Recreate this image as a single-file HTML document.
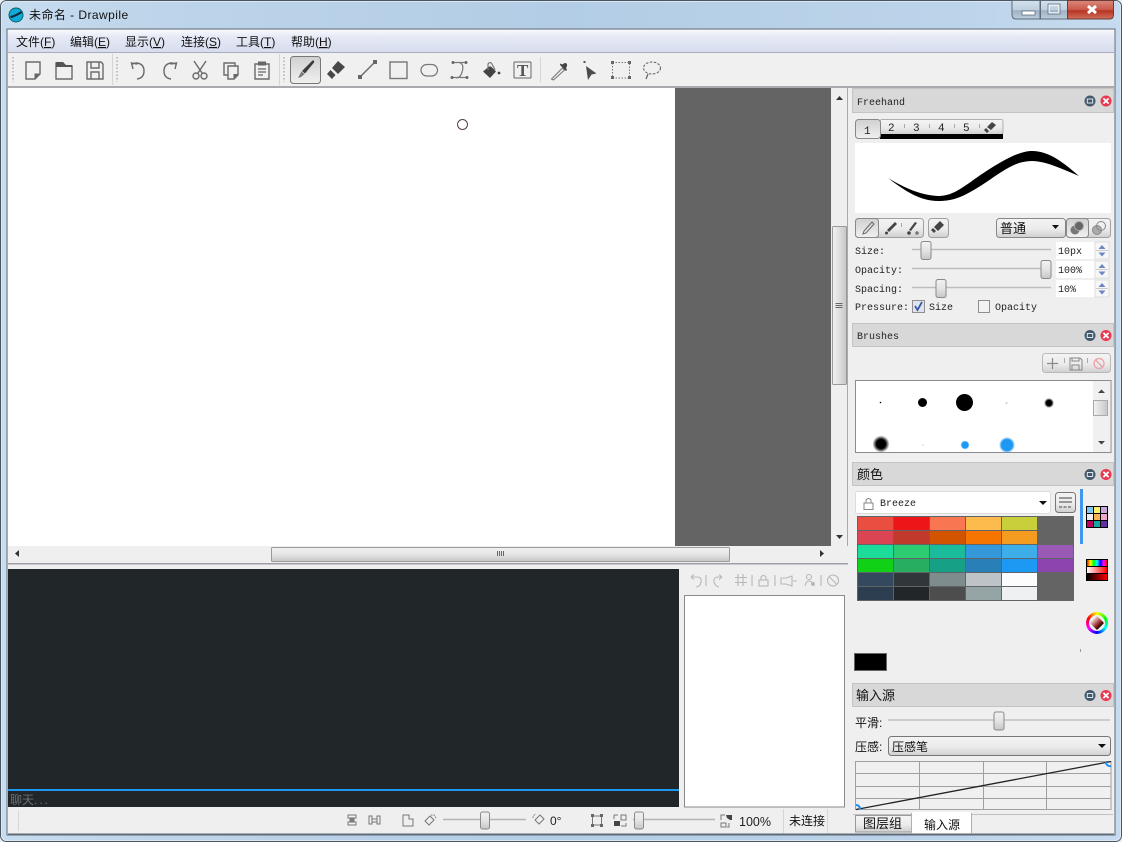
<!DOCTYPE html>
<html><head><meta charset="utf-8"><title>未命名 - Drawpile</title>
<style>
html,body{margin:0;padding:0;width:1122px;height:842px;overflow:hidden;background:#fff;position:relative}
svg{display:block}
text{font-family:"Liberation Sans","Noto Sans CJK SC",sans-serif;font-size:12px;fill:#111}
.m{font-family:"Liberation Mono","Noto Sans CJK SC",monospace;font-size:10px;fill:#222}
.i{fill:none;stroke:#6a6a6a;stroke-width:1.4}
#wheel{position:absolute;left:1086px;top:612px;width:22px;height:22px;border-radius:50%;background:conic-gradient(#ff0,#0f0,#0ff,#00f,#f0f,#f00,#ff0)}
#wheel i{position:absolute;left:3px;top:3px;width:16px;height:16px;border-radius:50%;background:#efefef}
#wheel b{position:absolute;left:6px;top:6px;width:10px;height:10px;transform:rotate(45deg);background:linear-gradient(90deg,#e8d0d0,#a03030 60%,#200000);border-radius:1px}
</style></head><body>
<svg width="1122" height="842" viewBox="0 0 1122 842" xmlns="http://www.w3.org/2000/svg">
<defs>
<linearGradient id="frame" x1="0" y1="0" x2="1" y2="0"><stop offset="0" stop-color="#c8dcef"/><stop offset=".12" stop-color="#bed5ea"/><stop offset=".5" stop-color="#b2cde5"/><stop offset=".85" stop-color="#bcd4ea"/><stop offset="1" stop-color="#c6dbef"/></linearGradient>
<linearGradient id="menu" x1="0" y1="0" x2="0" y2="1"><stop offset="0" stop-color="#f8f9fd"/><stop offset=".3" stop-color="#e6eaf6"/><stop offset="1" stop-color="#d7ddee"/></linearGradient>
<linearGradient id="btn" x1="0" y1="0" x2="0" y2="1"><stop offset="0" stop-color="#f4f4f4"/><stop offset=".55" stop-color="#ebebeb"/><stop offset="1" stop-color="#cfcfcf"/></linearGradient>
<linearGradient id="act" x1="0" y1="0" x2="0" y2="1"><stop offset="0" stop-color="#d0d0d0"/><stop offset="1" stop-color="#f0f0f0"/></linearGradient>
<linearGradient id="thumb" x1="0" y1="0" x2="0" y2="1"><stop offset="0" stop-color="#f2f2f2"/><stop offset=".5" stop-color="#e4e4e4"/><stop offset="1" stop-color="#c6c6c6"/></linearGradient>
<linearGradient id="thumbv" x1="0" y1="0" x2="1" y2="0"><stop offset="0" stop-color="#f2f2f2"/><stop offset=".5" stop-color="#dedede"/><stop offset="1" stop-color="#c6c6c6"/></linearGradient>
<linearGradient id="min" x1="0" y1="0" x2="0" y2="1"><stop offset="0" stop-color="#d4e2ef"/><stop offset=".5" stop-color="#c0d0df"/><stop offset=".55" stop-color="#9fb2c4"/><stop offset="1" stop-color="#bccddc"/></linearGradient>
<linearGradient id="close" x1="0" y1="0" x2="0" y2="1"><stop offset="0" stop-color="#d9897c"/><stop offset=".5" stop-color="#c9584a"/><stop offset=".55" stop-color="#b73322"/><stop offset="1" stop-color="#d0705c"/></linearGradient>
<linearGradient id="r1" x1="0" y1="0" x2="1" y2="0"><stop offset="0" stop-color="#f00"/><stop offset=".17" stop-color="#ff0"/><stop offset=".33" stop-color="#0f0"/><stop offset=".5" stop-color="#0ff"/><stop offset=".67" stop-color="#00f"/><stop offset=".83" stop-color="#f0f"/><stop offset="1" stop-color="#f00"/></linearGradient>
<linearGradient id="r2" x1="0" y1="0" x2="1" y2="0"><stop offset="0" stop-color="#fff"/><stop offset="1" stop-color="#f00"/></linearGradient>
<linearGradient id="r3" x1="0" y1="0" x2="1" y2="0"><stop offset="0" stop-color="#000"/><stop offset="1" stop-color="#f00"/></linearGradient>
<radialGradient id="sb"><stop offset="0" stop-color="#000"/><stop offset=".55" stop-color="#000"/><stop offset="1" stop-color="#000" stop-opacity="0"/></radialGradient>
<radialGradient id="bb"><stop offset="0" stop-color="#1d99f3"/><stop offset=".7" stop-color="#1d99f3"/><stop offset="1" stop-color="#1d99f3" stop-opacity="0"/></radialGradient>
<g id="tb"><circle cx="0" cy="0" r="5.500" fill="#44586c"/><rect x="-3.200" y="-2.500" width="6.400" height="5" fill="#dfe6ee"/><rect x="-2.200" y="-1.500" width="4.400" height="3" fill="#44586c"/>
<circle cx="16" cy="0" r="5.500" fill="#e8384f"/><path d="M13.400-2.600l5.200 5.200M18.600-2.600l-5.200 5.200" stroke="#fff" stroke-width="1.800"/></g>
<g id="hs"><rect x="-5" y="-9" width="10" height="18" rx="2" fill="url(#thumb)" stroke="#8a8a8a"/></g>
<g id="hs2"><rect x="-4.500" y="-8.500" width="9" height="17" rx="2" fill="url(#thumb)" stroke="#8a8a8a"/></g>
<g id="spin"><rect x="0" y="0" width="39" height="17" fill="#fff"/><rect x="39" y="0" width="14" height="17" fill="#f6f6f6" stroke="#ddd"/><path d="M42.500 7l3.500-4 3.500 4z" fill="#6b86c0"/><path d="M42.500 10.500l3.500 4 3.500-4z" fill="#6b86c0"/><path d="M40 8.500h12" stroke="#ccc"/></g>
</defs>

<!-- frame -->
<rect width="1122" height="842" fill="#e8eef5"/>
<rect x=".5" y=".5" width="1121" height="841" rx="6" fill="url(#frame)" stroke="#4a5560"/>
<rect x="1.500" y="1.500" width="1119" height="839" rx="5" fill="none" stroke="#dbe8f4"/>
<rect x="7" y="29" width="1108" height="806" fill="#efefef" stroke="#5f6b77"/>

<!-- title bar -->
<circle cx="16" cy="15" r="7" fill="#12a9d8" stroke="#066"/>
<path d="M10.500 17q5-1 11-5" stroke="#0c2a3c" stroke-width="2.200" fill="none"/>
<text x="29" y="19" style="letter-spacing:.45px">未命名 - Drawpile</text>
<path d="M1012 .5v14q0 4.500 4 4.500h24V.5z" fill="url(#min)" stroke="#5d6b78"/>
<rect x="1040.500" y=".5" width="27" height="18.500" fill="url(#min)" stroke="#5d6b78"/>
<path d="M1067.500 .5V19h42q4 0 4-4.500V.5z" fill="url(#close)" stroke="#6d3a35"/>
<rect x="1022" y="11" width="13" height="4" fill="#fff" stroke="#4d5f70" stroke-width=".7"/>
<rect x="1049" y="5" width="10" height="8" fill="none" stroke="#f4f6f8" stroke-width="1.500"/><rect x="1048" y="4" width="12" height="10" fill="none" stroke="#4d5f70" stroke-width=".7"/>
<path d="M1088 6l8 7M1096 6l-8 7" stroke="#fff" stroke-width="3"/>

<!-- menu -->
<rect x="8" y="30" width="1106" height="22" fill="url(#menu)"/>
<rect x="8" y="52" width="1106" height="1" fill="#a9aebc"/>
<text x="16" y="46">文件(<tspan text-decoration="underline">F</tspan>)</text>
<text x="70" y="46">编辑(<tspan text-decoration="underline">E</tspan>)</text>
<text x="125" y="46">显示(<tspan text-decoration="underline">V</tspan>)</text>
<text x="181" y="46">连接(<tspan text-decoration="underline">S</tspan>)</text>
<text x="236" y="46">工具(<tspan text-decoration="underline">T</tspan>)</text>
<text x="291" y="46">帮助(<tspan text-decoration="underline">H</tspan>)</text>

<!-- toolbar -->
<rect x="8" y="53" width="1106" height="33" fill="#f0f0f0"/>
<rect x="8" y="86" width="1106" height="2" fill="#a9a9ae"/>
<path d="M13 57v25M117 57v25M284 57v25" stroke="#c0c0c0" stroke-width="2" stroke-dasharray="1.500 2"/>
<path d="M112.500 54v31M279.500 54v31M540.500 57v25" stroke="#d4d4d4"/>
<!-- new -->
<path class="i" d="M26 62h14v12l-5 5H26z"/><path d="M34.500 79v-5.500h5.500z" fill="#666"/>
<!-- open -->
<path class="i" d="M56 67v12h16V66H65l-2-3h-7z"/><path d="M56 62h7l3 3h6v2H56z" fill="#555"/>
<!-- save -->
<path class="i" d="M87 62h14l2 2v15H87z"/><path class="i" stroke-width="1.200" d="M91 62v6h8v-6M91 79v-7h8v7"/>
<!-- undo -->
<path class="i" d="M133 69l-1.500-6 6 1M132 64q3-1 5-1 7 1 7 8t-7 8"/>
<!-- redo -->
<path class="i" d="M175 69l1.500-6-6 1M176 64q-3-1-5-1-7 1-7 8t7 8"/>
<!-- cut -->
<path class="i" d="M194 61l8 12M206 61l-8 12"/><circle class="i" cx="196" cy="76" r="3"/><circle class="i" cx="204" cy="76" r="3"/>
<!-- copy -->
<path class="i" d="M235 66v-3h-11v12h4"/><path class="i" d="M228 66h10v9l-4 4h-6z"/><path d="M233.500 79v-5h4.500z" fill="#666"/>
<!-- paste -->
<path class="i" d="M255 64h14v15h-14z"/><rect x="258" y="61.500" width="8" height="4" fill="#666"/><path d="M258 69h8M258 72h8M258 75h5" stroke="#666" stroke-width="1.200"/>
<!-- brush active -->
<rect x="290.500" y="56.500" width="30" height="27" rx="3" fill="url(#act)" stroke="#777"/>
<path d="M313.500 60.500q1 .5 .5 2l-9 11-3-2.500 10-10q1-1 1.500-.5z" fill="#3c3c3c"/><path d="M301.500 71.500l3 2.500-3.500 3-3 1z" fill="#777"/>
<!-- eraser -->
<path d="M338 61l7 6-7 7-6-6z" fill="#484848"/><path d="M330.500 70l-3.500 4 5 5 3.500-4z" fill="#484848"/>
<!-- line -->
<path class="i" d="M360 77l15-15"/><rect x="358" y="75" width="4" height="4" fill="#666"/><rect x="373" y="60" width="4" height="4" fill="#666"/>
<!-- rect -->
<rect x="390" y="62" width="17" height="16.500" fill="none" stroke="#777" stroke-width="1.400"/>
<!-- ellipse -->
<rect x="421" y="64.500" width="16.500" height="11.500" rx="5.700" fill="none" stroke="#777" stroke-width="1.200"/>
<!-- bezier -->
<path fill="none" stroke="#777" stroke-width="1.200" d="M453 62.500h13M459 62.500q5 1 3.500 8t-6 7.500M452 77.500h15"/><circle cx="453" cy="62.500" r="1.500" fill="#666"/><circle cx="466" cy="62.500" r="1.500" fill="#666"/><circle cx="467" cy="77.500" r="1.500" fill="#666"/><circle cx="452" cy="77.500" r="1.500" fill="#666"/>
<!-- fill -->
<path d="M483 71.500l6-5 2 0 5 5-6 6.500z" fill="#444"/><path d="M488 70v-6q2-3 4 0l3 6" fill="none" stroke="#777" stroke-width="1.200"/><circle cx="499" cy="73" r="1.400" fill="#444"/>
<!-- text -->
<path fill="none" stroke="#666" stroke-width="1" d="M514 62v16M531 62v16M514 62h17M514 78h17"/><text x="517" y="76" style="font-family:'Liberation Serif',serif;font-size:17px;font-weight:bold;fill:#555">T</text>
<!-- picker -->
<path fill="none" stroke="#777" stroke-width="1.100" d="M551.500 79l11-11 2 2-11 10z"/><path d="M560 65l6 6 1-1-1-2q2-3 .5-4.500t-4 1l-2-1z" fill="#444"/>
<!-- pointer -->
<path d="M586 66l10.500 7.500-5 1-3.500 5.500z" fill="#4a4a4a"/><rect x="583.500" y="61" width="2" height="2" fill="#555"/>
<!-- selection -->
<rect x="612.500" y="62.500" width="17" height="15.500" fill="none" stroke="#777" stroke-dasharray="1.500 1.500"/><g fill="#666"><rect x="611" y="61" width="3" height="3"/><rect x="628" y="61" width="3" height="3"/><rect x="611" y="76" width="3" height="3"/><rect x="628" y="76" width="3" height="3"/></g>
<!-- lasso -->
<ellipse cx="652" cy="68" rx="8.500" ry="6" fill="none" stroke="#666" stroke-width="1.100" stroke-dasharray="2.500 1.500"/><path d="M648 74l-2 5" stroke="#666" stroke-width="1.300"/>

<!-- canvas -->
<rect x="8" y="88" width="667" height="458" fill="#fff"/>
<rect x="675" y="88" width="156" height="458" fill="#646464"/>
<circle cx="462.500" cy="124.500" r="5" fill="none" stroke="#5a3a50"/>
<rect x="831" y="88" width="16" height="458" fill="#efefef"/>
<path d="M847.500 88v475" stroke="#a8a8b0"/>
<path d="M836 100l3.500-4 3.500 4z" fill="#333"/><path d="M836 535l3.500 4 3.500-4z" fill="#333"/>
<rect x="832.500" y="226.500" width="14" height="158" rx="1" fill="url(#thumbv)" stroke="#9a9a9a"/>
<path d="M835.500 303.500h7M835.500 305.500h7M835.500 307.500h7" stroke="#666"/>
<rect x="8" y="546" width="840" height="17" fill="#efefef"/>
<rect x="8" y="563" width="840" height="1.500" fill="#9f9fa8"/>
<path d="M19 550l-4 3.500 4 3.500z" fill="#333"/><path d="M820 550l4 3.500-4 3.500z" fill="#333"/>
<rect x="271.500" y="547.500" width="458" height="14" rx="1" fill="url(#thumb)" stroke="#9a9a9a"/>
<path d="M497.500 551v5M499.500 551v5M501.500 551v5M503.500 551v5" stroke="#666"/>

<!-- chat -->
<rect x="8" y="569" width="671" height="238" fill="#212629"/>
<rect x="8" y="789" width="671" height="2" fill="#1d99f3"/>
<text x="10" y="804" style="fill:#6c6f71">聊天<tspan style="letter-spacing:2px">...</tspan></text>

<!-- user list -->
<g style="fill:none;stroke:#b8b8b8;stroke-width:1.100">
<path d="M691 577h6q5 0 4 5t-5 5M691 577l3-2.500M691 577l3 2.500"/>
<path d="M706 575v11"/>
<path d="M722 577h-5q-4 1-3 5t5 5M722 577l-3-2.500M722 577l-3 2.500"/>
<path d="M738 574v12M743 574v12M735 577.500h12M735 582.500h12"/>
<path d="M752 575v11"/>
<rect x="759" y="580" width="9" height="6"/><path d="M761 580v-3q2.500-3 5 0v3"/>
<path d="M775 575v11"/>
<path d="M781 578h5l6-2v10l-6-2h-5zM793 581h4"/>
<circle cx="809" cy="577" r="2.500"/><path d="M805 586q1-5 4-5 3 0 3 2"/>
<path d="M821 575v11"/>
<circle cx="833" cy="580.500" r="5.500"/><path d="M829 576.500l8 8"/>
</g>
<circle cx="813" cy="584" r="2" fill="#b8b8b8"/>
<rect x="684.500" y="595.500" width="160" height="211.500" fill="#fff" stroke="#8a8a8a"/>

<!-- status bar -->
<path d="M18.500 811v20" stroke="#d6d6d6"/>
<path d="M8 834h1106" stroke="#5f6b77"/>
<g fill="none" stroke="#777" stroke-width="1">
<path d="M348 815h8v3h-8zM348 822h8v3h-8z"/><path d="M350 819h4v2h-4z" fill="#888"/>
<path d="M369 816h3v8h-3zM377 816h3v8h-3zM372 819h5v3h-5z"/>
<path d="M403 815h6v4h4v7h-10zM409 815v4"/>
<path d="M425 821l5-5 4 4-5 5z"/><path d="M431 815h3l2 3" stroke-dasharray="1.500 1"/>
<path d="M535 820l5-5 4 4-5 5z"/><path d="M533 818q0-3 3-4" stroke-dasharray="1.500 1"/>
<rect x="592.500" y="816" width="9" height="9"/>
</g>
<g fill="#666"><rect x="591" y="814" width="3" height="3"/><rect x="600" y="814" width="3" height="3"/><rect x="591" y="824" width="3" height="3"/><rect x="600" y="824" width="3" height="3"/></g>
<path d="M621 815h5v5h-5zM614 815h4M614 815v4M621 826h5v-3" fill="none" stroke="#777"/><path d="M614 821h6v5h-6z" fill="#444"/>
<path d="M721 820v-5h4M721 823h5v4h-5zM729 823v4h-2" fill="none" stroke="#777"/><path d="M726 815h6v5h-2l-3-2z" fill="#444"/>
<path d="M443 819.500h83M633 819.500h82" stroke="#b5b5b5" stroke-width="1.500"/>
<use href="#hs2" x="485" y="820.500"/>
<use href="#hs2" x="639" y="820.500"/>
<text x="550" y="825" style="fill:#222">0°</text>
<text x="739" y="826" style="font-size:12.500px;fill:#222">100%</text>
<path d="M783.500 809v24M827.500 809v24" stroke="#d6d6d6"/>
<text x="789" y="825">未连接</text>

<!-- dock: Freehand -->
<rect x="852.500" y="88.500" width="261" height="24" fill="#d8d8d8" stroke="#c4c4c4"/>
<text class="m" x="857" y="105">Freehand</text>
<use href="#tb" x="1090" y="101"/>
<!-- tabs -->
<rect x="880" y="119.500" width="123" height="15" rx="2" fill="url(#btn)" stroke="#b0b0b0"/>
<rect x="880" y="134" width="123" height="5" fill="#000"/>
<rect x="855.500" y="119.500" width="25" height="19" rx="3" fill="url(#act)" stroke="#888"/>
<text class="m" x="864" y="134" style="font-size:11px">1</text>
<text class="m" x="888" y="131" style="font-size:11px">2</text>
<text class="m" x="913" y="131" style="font-size:11px">3</text>
<text class="m" x="938" y="131" style="font-size:11px">4</text>
<text class="m" x="963" y="131" style="font-size:11px">5</text>
<path d="M904.500 124v4M929.500 124v4M954.500 124v4M979.500 124v4" stroke="#aaa"/>
<path d="M992 122l4 3-5 5-4-3z" fill="#444"/><path d="M986 128l-2 2 3 3 2-2z" fill="#444"/>
<!-- preview -->
<rect x="855" y="143" width="256" height="70" fill="#fff"/>
<path d="M888 178C905 188 920 195 938 196C955 196 965 185 985 172C1005 159 1020 151 1032 151C1050 151 1065 164 1079 176C1060 168 1045 161 1032 161C1015 161 1003 171 985 183C965 196 955 201 938 201C920 201 905 191 888 178Z" fill="#000"/>
<!-- button row -->
<rect x="855.500" y="218.500" width="68" height="19" rx="3" fill="url(#btn)" stroke="#a0a0a0"/>
<rect x="855.500" y="218.500" width="23" height="19" rx="3" fill="url(#act)" stroke="#888"/>
<path d="M901.500 223v4" stroke="#aaa"/>
<path fill="none" stroke="#666" stroke-width="1" d="M872 222l2 2-8 9-3 1 1-3z"/>
<path d="M895 222l2 2-8 8-2-2z" fill="#444"/><circle cx="886.500" cy="233" r="1.500" fill="#444"/>
<path d="M915 222l2 1-6 8-2-1z" fill="#444"/><circle cx="909" cy="233" r="1.800" fill="#444"/><circle cx="917" cy="233" r="1.800" fill="#777"/>
<rect x="928.500" y="218.500" width="20" height="19" rx="3" fill="url(#btn)" stroke="#a0a0a0"/>
<path d="M940 221l4 4-6 6-4-4z" fill="#444"/><path d="M933 228l-2 2 3 3 2-2z" fill="#444"/>
<rect x="996.500" y="218.500" width="69" height="19" rx="3" fill="url(#btn)" stroke="#888"/>
<text x="1000" y="233" style="font-size:13px">普通</text>
<path d="M1052 225h7l-3.500 4z" fill="#111"/>
<rect x="1066.500" y="218.500" width="44" height="19" rx="3" fill="url(#btn)" stroke="#a0a0a0"/>
<rect x="1066.500" y="218.500" width="22" height="19" rx="3" fill="url(#act)" stroke="#888"/>
<circle cx="1075" cy="230" r="4.500" fill="#777"/><circle cx="1079" cy="226" r="4.500" fill="#666" stroke="#aaa"/>
<circle cx="1097" cy="230" r="4.500" fill="#aaa" stroke="#888"/><circle cx="1101" cy="226" r="4.500" fill="none" stroke="#888"/>
<!-- sliders -->
<text class="m" x="855" y="254">Size:</text>
<text class="m" x="855" y="273">Opacity:</text>
<text class="m" x="855" y="292">Spacing:</text>
<path d="M912 249.500h139M912 268.500h139M912 287.500h139" stroke="#bdbdbd" stroke-width="1.500"/>
<use href="#hs" x="926" y="250.500"/><use href="#hs" x="1046" y="269.500"/><use href="#hs" x="941" y="288.500"/>
<use href="#spin" x="1056" y="242"/><use href="#spin" x="1056" y="261"/><use href="#spin" x="1056" y="280"/>
<text class="m" x="1058" y="254">10px</text>
<text class="m" x="1058" y="273">100%</text>
<text class="m" x="1058" y="292">10%</text>
<text class="m" x="855" y="310">Pressure:</text>
<rect x="912.500" y="300.500" width="12" height="12" fill="#dfe3ee" stroke="#8f8f8f"/>
<path d="M915 306l2.500 4 4.500-8" fill="none" stroke="#3a5aa8" stroke-width="1.800"/>
<text class="m" x="929" y="310">Size</text>
<rect x="978.500" y="300.500" width="11" height="12" fill="#f2f2f2" stroke="#8f8f8f"/>
<text class="m" x="995" y="310">Opacity</text>

<!-- Brushes -->
<rect x="852.500" y="323.500" width="261" height="23" fill="#d8d8d8" stroke="#c4c4c4"/>
<text class="m" x="857" y="339">Brushes</text>
<use href="#tb" x="1090" y="335.500"/>
<rect x="1042.500" y="353.500" width="68" height="19" rx="3" fill="url(#btn)" stroke="#b8b8b8"/>
<path d="M1047 363.500h11M1052.500 358v11" stroke="#888" stroke-width="1.200"/>
<path d="M1064.500 358v5M1087.500 358v5" stroke="#aaa"/>
<path d="M1070 358h10l2 2v10h-12z" fill="none" stroke="#888"/><path d="M1072 358v3h7v-3M1072 370v-5h7v5" fill="none" stroke="#888"/>
<circle cx="1099" cy="363.500" r="5" fill="none" stroke="#f0a0a8" stroke-width="1.300"/><path d="M1095.500 360l7 7" stroke="#f0a0a8" stroke-width="1.300"/>
<rect x="855.500" y="380.500" width="255.500" height="72" fill="#fff" stroke="#8a8a92"/>
<rect x="1093" y="381" width="17" height="71" fill="#f0f0f0"/>
<path d="M1098 393l3.500-3.500 3.500 3.500z" fill="#444"/><path d="M1098 441l3.500 3.500 3.500-3.500z" fill="#444"/>
<rect x="1093.500" y="400.500" width="14" height="15" fill="url(#thumbv)" stroke="#aaa"/>
<circle cx="880.500" cy="402.500" r=".8" fill="#000"/>
<circle cx="922.500" cy="402.500" r="4.500" fill="#000"/>
<circle cx="964.500" cy="402.500" r="8.500" fill="#000"/>
<circle cx="1006.500" cy="403" r="1" fill="#ccc"/>
<circle cx="1049" cy="403" r="5" fill="url(#sb)"/>
<circle cx="881" cy="444" r="8.500" fill="url(#sb)"/>
<circle cx="923" cy="445" r="1" fill="#dbe8f2"/>
<circle cx="965" cy="445" r="4.500" fill="url(#bb)"/>
<circle cx="1007" cy="445" r="8" fill="url(#bb)"/>

<!-- Color -->
<rect x="852.500" y="462.500" width="261" height="23" fill="#d8d8d8" stroke="#c4c4c4"/>
<text x="857" y="479" style="font-size:13px">颜色</text>
<use href="#tb" x="1090" y="474.500"/>
<rect x="855.500" y="491.500" width="195" height="22" rx="2" fill="#fff" stroke="#dcdcdc"/>
<rect x="864" y="503" width="9" height="6.500" fill="none" stroke="#888"/><path d="M866 503v-3q2.500-3 5 0v3" fill="none" stroke="#888"/>
<text class="m" x="880" y="506">Breeze</text>
<path d="M1039 501h8l-4 4z" fill="#111"/>
<rect x="1055.500" y="492.500" width="20" height="20" rx="3" fill="url(#btn)" stroke="#777"/>
<path d="M1059 498h13M1059 502h13" stroke="#666" stroke-width="1.300"/><path d="M1059 507h13" stroke="#666" stroke-dasharray="3 1.500" stroke-width="1.300"/>
<rect x="1080" y="489" width="3" height="55" fill="#3f97ee"/>
<!-- palette -->
<rect x="857" y="516" width="217" height="85" fill="#5f6468"/>
<g>
<rect x="858" y="517" width="35" height="13" fill="#e94e40"/><rect x="894" y="517" width="35" height="13" fill="#ee1518"/><rect x="930" y="517" width="35" height="13" fill="#f97652"/><rect x="966" y="517" width="35" height="13" fill="#fdba4d"/><rect x="1002" y="517" width="35" height="13" fill="#c9ce3b"/><rect x="1038" y="517" width="36" height="13" fill="#646464"/>
<rect x="858" y="531" width="35" height="13" fill="#da4453"/><rect x="894" y="531" width="35" height="13" fill="#c0392b"/><rect x="930" y="531" width="35" height="13" fill="#d35400"/><rect x="966" y="531" width="35" height="13" fill="#f67400"/><rect x="1002" y="531" width="35" height="13" fill="#f39c1f"/><rect x="1038" y="530" width="36" height="15" fill="#646464"/>
<rect x="858" y="545" width="35" height="13" fill="#1cdc9a"/><rect x="894" y="545" width="35" height="13" fill="#2ecc71"/><rect x="930" y="545" width="35" height="13" fill="#1abc9c"/><rect x="966" y="545" width="35" height="13" fill="#3498db"/><rect x="1002" y="545" width="35" height="13" fill="#3daee9"/><rect x="1038" y="545" width="35" height="13" fill="#9b59b6"/>
<rect x="858" y="559" width="35" height="13" fill="#11d116"/><rect x="894" y="559" width="35" height="13" fill="#27ae60"/><rect x="930" y="559" width="35" height="13" fill="#16a085"/><rect x="966" y="559" width="35" height="13" fill="#2980b9"/><rect x="1002" y="559" width="35" height="13" fill="#1d99f3"/><rect x="1038" y="559" width="35" height="13" fill="#8e44ad"/>
<rect x="858" y="573" width="35" height="13" fill="#34495e"/><rect x="894" y="573" width="35" height="13" fill="#31363b"/><rect x="930" y="573" width="35" height="13" fill="#7f8c8d"/><rect x="966" y="573" width="35" height="13" fill="#bdc3c7"/><rect x="1002" y="573" width="35" height="13" fill="#fcfcfc"/><rect x="1038" y="572" width="36" height="29" fill="#646464"/>
<rect x="858" y="587" width="35" height="13" fill="#2c3e50"/><rect x="894" y="587" width="35" height="13" fill="#232629"/><rect x="930" y="587" width="35" height="13" fill="#4d4d4d"/><rect x="966" y="587" width="35" height="13" fill="#95a5a6"/><rect x="1002" y="587" width="35" height="13" fill="#eff0f1"/>
</g>
<!-- color mode icons -->
<rect x="1086" y="506" width="22" height="22" fill="#000"/>
<rect x="1087" y="507" width="6" height="6" fill="#7ec8f8"/><rect x="1094" y="507" width="6" height="6" fill="#fdf06c"/><rect x="1101" y="507" width="6" height="6" fill="#c8a8d8"/>
<rect x="1087" y="514" width="6" height="6" fill="#eee"/><rect x="1094" y="514" width="6" height="6" fill="#fdb050"/><rect x="1101" y="514" width="6" height="6" fill="#f0a8c8"/>
<rect x="1087" y="521" width="6" height="6" fill="#c0005c"/><rect x="1094" y="521" width="6" height="6" fill="#10a8a0"/><rect x="1101" y="521" width="6" height="6" fill="#6030a0"/>
<rect x="1086" y="559" width="22" height="22" fill="#000"/>
<rect x="1087" y="560" width="20" height="6" fill="url(#r1)"/><rect x="1087" y="567" width="20" height="6" fill="url(#r2)"/><rect x="1087" y="574" width="20" height="6" fill="url(#r3)"/>
<path d="M1080.500 649v3" stroke="#999"/>
<rect x="854.500" y="653.500" width="32" height="17" fill="#000" stroke="#666"/>

<!-- Input -->
<rect x="852.500" y="683.500" width="261" height="23" fill="#d8d8d8" stroke="#c4c4c4"/>
<text x="856" y="700" style="font-size:13px">输入源</text>
<use href="#tb" x="1090" y="695.500"/>
<text x="855" y="727">平滑:</text>
<path d="M888 720h222" stroke="#c0c0c0" stroke-width="1.500"/>
<use href="#hs" x="999" y="721"/>
<text x="855" y="751">压感:</text>
<rect x="888.500" y="736.500" width="222" height="19" rx="3" fill="url(#btn)" stroke="#777"/>
<text x="892" y="751">压感笔</text>
<path d="M1098 744h8l-4 4z" fill="#111"/>
<rect x="855.500" y="761.500" width="255.500" height="48" fill="#f0f0f0" stroke="#a0a0a0"/>
<path d="M919.500 762v48M983.500 762v48M1046.500 762v48M856 773.500h255M856 786.500h255M856 798.500h255" stroke="#a0a0a0"/>
<path d="M856 809.500L1111 761.500" stroke="#222" stroke-width="1.300"/>
<path d="M856 805a4 4 0 0 1 4 4.500" fill="none" stroke="#1d8ff0" stroke-width="2"/>
<path d="M1106 762a4 4 0 0 0 5 4" fill="none" stroke="#1d8ff0" stroke-width="2"/>
<!-- tabs -->
<path d="M853 814.500h260" stroke="#c0c0c0"/>
<rect x="855.500" y="815.500" width="56" height="16.500" fill="url(#btn)" stroke="#9a9a9a"/>
<rect x="911.500" y="813.500" width="60" height="20" fill="#fff" stroke="#b0b0b0"/>
<rect x="912" y="812" width="59" height="3" fill="#fff"/>
<text x="863" y="828" style="font-size:13px">图层组</text>
<text x="924" y="829">输入源</text>
</svg>
<div id="wheel"><i></i><b></b></div>
</body></html>
